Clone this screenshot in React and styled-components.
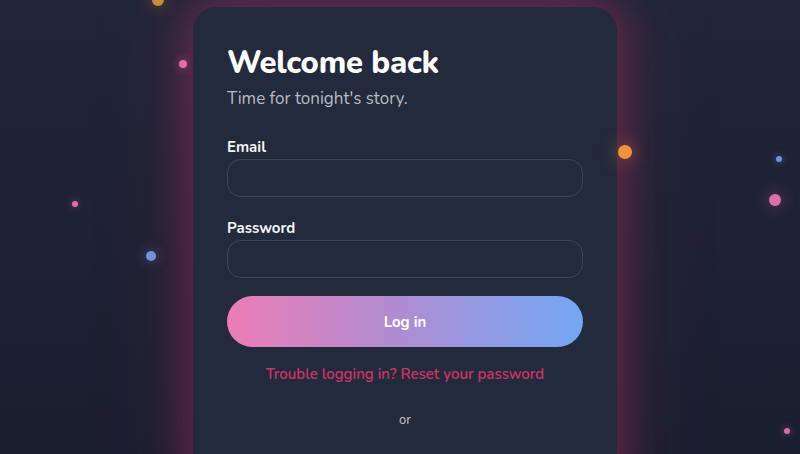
import styled, { createGlobalStyle } from "styled-components";

const GlobalStyle = createGlobalStyle`
  html, body {
    margin: 0;
    padding: 0;
    background: #1b2032;
    font-family: "Nunito", "Lato", "Open Sans", sans-serif;
    overflow: hidden;
  }
`;

const Page = styled.div`
  position: relative;
  height: 454px;
  overflow: hidden;
  display: flex;
  justify-content: center;
  padding-left: 10px;
  background: linear-gradient(180deg, #202638 0%, #1a1f30 100%);
`;

const Dot = styled.span`
  position: absolute;
  border-radius: 50%;
  background: ${(p) => p.$color};
  box-shadow: 0 0 ${(p) => p.$size * 1.2}px ${(p) => p.$color}88;
  width: ${(p) => p.$size}px;
  height: ${(p) => p.$size}px;
`;

const Card = styled.div`
  position: relative;
  margin-top: 7px;
  width: 424px;
  height: 500px;
  box-sizing: border-box;
  padding: 36px 34px 0;
  background: #232a3b;
  border-radius: 24px;
  box-shadow: 0 0 40px 6px rgba(214, 51, 108, 0.35),
    0 0 90px 20px rgba(214, 51, 108, 0.12);
  display: flex;
  flex-direction: column;
`;

const Title = styled.h1`
  margin: 0;
  color: #ffffff;
  font-size: 31px;
  font-weight: 800;
  line-height: 40px;
  letter-spacing: -0.2px;
`;

const Subtitle = styled.p`
  margin: 4px 0 0;
  color: #b8bcc6;
  font-size: 17px;
  line-height: 24px;
`;

const Form = styled.form`
  margin-top: 26px;
  display: flex;
  flex-direction: column;
`;

const Field = styled.label`
  display: flex;
  flex-direction: column;
  gap: 2px;
  margin-bottom: 21px;
`;

const Label = styled.span`
  color: #f3f4f6;
  font-size: 15px;
  font-weight: 700;
  line-height: 20px;
`;

const Input = styled.input`
  box-sizing: border-box;
  height: 38px;
  width: 100%;
  border-radius: 14px;
  border: 1px solid rgba(255, 255, 255, 0.13);
  background: transparent;
  color: #fff;
  padding: 0 14px;
  font: inherit;
  outline: none;
`;

const Button = styled.button`
  margin-top: -3px;
  height: 51px;
  border: none;
  border-radius: 999px;
  background: linear-gradient(90deg, #ec7db4 0%, #b38bd0 45%, #72a7f3 100%);
  color: #ffffff;
  font: inherit;
  font-size: 15px;
  font-weight: 700;
  cursor: pointer;
`;

const ResetLink = styled.a`
  margin-top: 17px;
  text-align: center;
  color: #cf3469;
  font-size: 15px;
  font-weight: 600;
  line-height: 20px;
  text-decoration: none;
`;

const Divider = styled.div`
  margin-top: 27px;
  text-align: center;
  color: #c3c7d0;
  font-size: 13px;
`;

const dots = [
  { x: 152, y: -6, size: 12, color: "#c98a3a" },
  { x: 179, y: 60, size: 8, color: "#e86aa6" },
  { x: 72, y: 201, size: 6, color: "#e86aa6" },
  { x: 146, y: 251, size: 10, color: "#6f91e0" },
  { x: 618, y: 145, size: 14, color: "#f0923a" },
  { x: 776, y: 156, size: 6, color: "#6f91e0" },
  { x: 769, y: 194, size: 12, color: "#e06fae" },
  { x: 784, y: 428, size: 6, color: "#d86aa6" },
];

export default function App() {
  return (
    <>
      <GlobalStyle />
      <Page>
        <Card>
          <Title>Welcome back</Title>
          <Subtitle>Time for tonight's story.</Subtitle>
          <Form onSubmit={(e) => e.preventDefault()}>
            <Field>
              <Label>Email</Label>
              <Input type="email" />
            </Field>
            <Field>
              <Label>Password</Label>
              <Input type="password" />
            </Field>
            <Button type="submit">Log in</Button>
          </Form>
          <ResetLink href="#">Trouble logging in? Reset your password</ResetLink>
          <Divider>or</Divider>
        </Card>
        {dots.map((d, i) => (
          <Dot
            key={i}
            $size={d.size}
            $color={d.color}
            style={{ left: d.x, top: d.y }}
          />
        ))}
      </Page>
    </>
  );
}
